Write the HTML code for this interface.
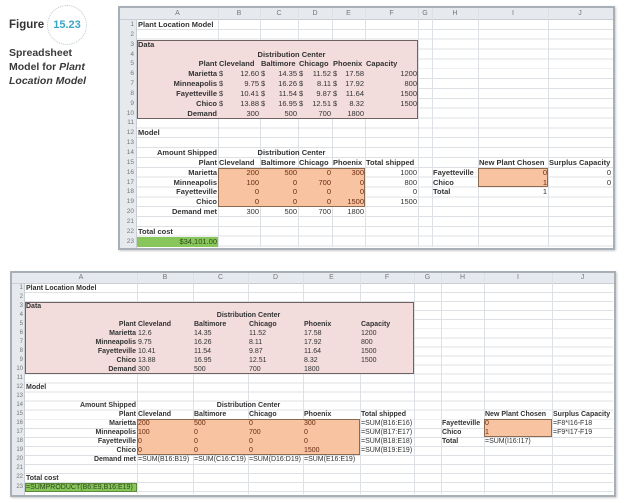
<!DOCTYPE html>
<html><head><meta charset="utf-8"><style>
*{margin:0;padding:0;box-sizing:border-box}
body{width:624px;height:503px;background:#fff;position:relative;overflow:hidden;font-family:"Liberation Sans",Arial,sans-serif}
div{position:absolute}
.t{font-weight:bold;font-size:7.5px;color:#333;white-space:nowrap;line-height:9.85px;height:9.85px}
.b .t,.t.bt{line-height:9.05px;height:9.05px;font-size:7px}
.n{font-weight:normal}
.R{text-align:right}.C{text-align:center}
.o{color:#6b2a12;font-weight:normal}
.ta{left:138px;width:79px}.tb{left:219px;width:40px}.tc{left:261px;width:36px}.td{left:299px;width:32px}.te{left:333px;width:31px}.tf{left:366px;width:51px}.th{left:433px;width:44px}.ti{left:479px;width:68px}.tj{left:549px;width:62px}
.ba{left:26px;width:110px}.bb{left:138px;width:54px}.bc{left:194px;width:53px}.bd{left:249px;width:53px}.be{left:304px;width:55px}.bf{left:361px;width:52px}.bh{left:442px;width:41px}.bi{left:485px;width:66px}.bj{left:553px;width:59px}
.frame{border:2px solid #a9afb6;box-shadow:1px 1px 2px #ccc}
.hdr{background:#e6e9ee}
.vl{width:1px;background:#dde1e6}
.hl{font-size:7px;color:#777;text-align:center;line-height:12px}
.rn{font-size:6.5px;color:#777;text-align:right;width:12px}
</style></head><body>

<!-- caption -->
<div style="left:9px;top:19px;font-weight:bold;font-size:11.5px;color:#333">Figure</div>
<div style="left:47px;top:5px;width:40px;height:40px;border-radius:50%;border:1.5px dotted #b9c6cc"></div>
<div style="left:50px;top:19px;width:34px;text-align:center;font-weight:bold;font-size:11px;color:#3aa6c4">15.23</div>
<div style="left:9px;top:46px;font-weight:bold;font-size:10.5px;color:#3a3a3a;line-height:14px">Spreadsheet<br>Model for <i>Plant</i><br><i>Location Model</i></div>

<!-- ============ TOP SHEET ============ -->
<div class="frame" style="left:118px;top:6px;width:497px;height:244px"></div>
<div class="hdr" style="left:120px;top:8px;width:493px;height:12px;border-bottom:1px solid #c8cdd3"></div>
<div class="hdr" style="left:120px;top:20px;width:17px;height:228px;border-right:1px solid #c8cdd3"></div>
<div style="left:137px;top:20px;width:476px;height:227px;background:repeating-linear-gradient(to bottom,transparent 0,transparent 8.85px,#dde1e6 8.85px,#dde1e6 9.85px)"></div>
<div class="vl" style="left:218px;top:8px;height:239px"></div>
<div class="vl" style="left:260px;top:8px;height:239px"></div>
<div class="vl" style="left:298px;top:8px;height:239px"></div>
<div class="vl" style="left:332px;top:8px;height:239px"></div>
<div class="vl" style="left:365px;top:8px;height:239px"></div>
<div class="vl" style="left:418px;top:8px;height:239px"></div>
<div class="vl" style="left:432px;top:8px;height:239px"></div>
<div class="vl" style="left:478px;top:8px;height:239px"></div>
<div class="vl" style="left:548px;top:8px;height:239px"></div>
<div class="hl" style="left:137px;top:8px;width:81px">A</div>
<div class="hl" style="left:218px;top:8px;width:42px">B</div>
<div class="hl" style="left:260px;top:8px;width:38px">C</div>
<div class="hl" style="left:298px;top:8px;width:34px">D</div>
<div class="hl" style="left:332px;top:8px;width:33px">E</div>
<div class="hl" style="left:365px;top:8px;width:53px">F</div>
<div class="hl" style="left:418px;top:8px;width:14px">G</div>
<div class="hl" style="left:432px;top:8px;width:46px">H</div>
<div class="hl" style="left:478px;top:8px;width:70px">I</div>
<div class="hl" style="left:548px;top:8px;width:64px">J</div>
<div class="rn" style="left:122px;top:20px;line-height:9.85px">1<br>2<br>3<br>4<br>5<br>6<br>7<br>8<br>9<br>10<br>11<br>12<br>13<br>14<br>15<br>16<br>17<br>18<br>19<br>20<br>21<br>22<br>23</div>

<div style="left:137px;top:39.7px;width:281px;height:79px;background:#f2dcdc;border:1px solid #6e6262"></div>
<div style="left:218px;top:167.75px;width:147px;height:39.4px;background:#f8c3a0;border:1px solid #8b6a50"></div>
<div style="left:478px;top:167.75px;width:70px;height:19.7px;background:#f8c3a0;border:1px solid #8b6a50"></div>
<div style="left:137px;top:236.7px;width:81px;height:9.85px;background:#88c55a"></div>

<div class="t ta" style="top:20px">Plant Location Model</div>
<div class="t ta" style="top:39.7px">Data</div>
<div class="t C" style="left:218px;width:147px;top:49.55px">Distribution Center</div>
<div class="t ta R" style="top:59.4px">Plant</div>
<div class="t tb" style="top:59.4px">Cleveland</div>
<div class="t tc" style="top:59.4px">Baltimore</div>
<div class="t td" style="top:59.4px">Chicago</div>
<div class="t te" style="top:59.4px">Phoenix</div>
<div class="t tf" style="top:59.4px">Capacity</div>

<div class="t ta R" style="top:69.25px">Marietta</div>
<div class="t ta R" style="top:79.1px">Minneapolis</div>
<div class="t ta R" style="top:88.95px">Fayetteville</div>
<div class="t ta R" style="top:98.8px">Chico</div>
<div class="t ta R" style="top:108.65px">Demand</div>

<div class="t n tb" style="top:69.25px">$</div><div class="t n tb R" style="top:69.25px">12.60</div>
<div class="t n tc" style="top:69.25px">$</div><div class="t n tc R" style="top:69.25px">14.35</div>
<div class="t n td" style="top:69.25px">$</div><div class="t n td R" style="top:69.25px">11.52</div>
<div class="t n te" style="top:69.25px">$</div><div class="t n te R" style="top:69.25px">17.58</div>
<div class="t n tf R" style="top:69.25px">1200</div>
<div class="t n tb" style="top:79.1px">$</div><div class="t n tb R" style="top:79.1px">9.75</div>
<div class="t n tc" style="top:79.1px">$</div><div class="t n tc R" style="top:79.1px">16.26</div>
<div class="t n td" style="top:79.1px">$</div><div class="t n td R" style="top:79.1px">8.11</div>
<div class="t n te" style="top:79.1px">$</div><div class="t n te R" style="top:79.1px">17.92</div>
<div class="t n tf R" style="top:79.1px">800</div>
<div class="t n tb" style="top:88.95px">$</div><div class="t n tb R" style="top:88.95px">10.41</div>
<div class="t n tc" style="top:88.95px">$</div><div class="t n tc R" style="top:88.95px">11.54</div>
<div class="t n td" style="top:88.95px">$</div><div class="t n td R" style="top:88.95px">9.87</div>
<div class="t n te" style="top:88.95px">$</div><div class="t n te R" style="top:88.95px">11.64</div>
<div class="t n tf R" style="top:88.95px">1500</div>
<div class="t n tb" style="top:98.8px">$</div><div class="t n tb R" style="top:98.8px">13.88</div>
<div class="t n tc" style="top:98.8px">$</div><div class="t n tc R" style="top:98.8px">16.95</div>
<div class="t n td" style="top:98.8px">$</div><div class="t n td R" style="top:98.8px">12.51</div>
<div class="t n te" style="top:98.8px">$</div><div class="t n te R" style="top:98.8px">8.32</div>
<div class="t n tf R" style="top:98.8px">1500</div>
<div class="t n tb R" style="top:108.65px">300</div>
<div class="t n tc R" style="top:108.65px">500</div>
<div class="t n td R" style="top:108.65px">700</div>
<div class="t n te R" style="top:108.65px">1800</div>

<div class="t ta" style="top:128.35px">Model</div>
<div class="t ta R" style="top:148.05px">Amount Shipped</div>
<div class="t C" style="left:218px;width:147px;top:148.05px">Distribution Center</div>
<div class="t ta R" style="top:157.9px">Plant</div>
<div class="t tb" style="top:157.9px">Cleveland</div>
<div class="t tc" style="top:157.9px">Baltimore</div>
<div class="t td" style="top:157.9px">Chicago</div>
<div class="t te" style="top:157.9px">Phoenix</div>
<div class="t tf" style="top:157.9px">Total shipped</div>
<div class="t ti" style="top:157.9px">New Plant Chosen</div>
<div class="t tj" style="top:157.9px">Surplus Capacity</div>

<div class="t ta R" style="top:167.75px">Marietta</div>
<div class="t ta R" style="top:177.6px">Minneapolis</div>
<div class="t ta R" style="top:187.45px">Fayetteville</div>
<div class="t ta R" style="top:197.3px">Chico</div>
<div class="t ta R" style="top:207.15px">Demand met</div>

<div class="t o tb R" style="top:167.75px">200</div><div class="t o tc R" style="top:167.75px">500</div><div class="t o td R" style="top:167.75px">0</div><div class="t o te R" style="top:167.75px">300</div><div class="t n tf R" style="top:167.75px">1000</div>
<div class="t o tb R" style="top:177.6px">100</div><div class="t o tc R" style="top:177.6px">0</div><div class="t o td R" style="top:177.6px">700</div><div class="t o te R" style="top:177.6px">0</div><div class="t n tf R" style="top:177.6px">800</div>
<div class="t o tb R" style="top:187.45px">0</div><div class="t o tc R" style="top:187.45px">0</div><div class="t o td R" style="top:187.45px">0</div><div class="t o te R" style="top:187.45px">0</div><div class="t n tf R" style="top:187.45px">0</div>
<div class="t o tb R" style="top:197.3px">0</div><div class="t o tc R" style="top:197.3px">0</div><div class="t o td R" style="top:197.3px">0</div><div class="t o te R" style="top:197.3px">1500</div><div class="t n tf R" style="top:197.3px">1500</div>
<div class="t n tb R" style="top:207.15px">300</div><div class="t n tc R" style="top:207.15px">500</div><div class="t n td R" style="top:207.15px">700</div><div class="t n te R" style="top:207.15px">1800</div>

<div class="t th" style="top:167.75px">Fayetteville</div><div class="t o ti R" style="top:167.75px">0</div><div class="t n tj R" style="top:167.75px">0</div>
<div class="t th" style="top:177.6px">Chico</div><div class="t o ti R" style="top:177.6px">1</div><div class="t n tj R" style="top:177.6px">0</div>
<div class="t th" style="top:187.45px">Total</div><div class="t n ti R" style="top:187.45px">1</div>

<div class="t ta" style="top:226.85px">Total cost</div>
<div class="t n ta R" style="top:236.7px;color:#2c4a1a">$34,101.00</div>

<!-- ============ BOTTOM SHEET ============ -->
<div class="b">
<div class="frame" style="left:10px;top:271px;width:606px;height:226px"></div>
<div class="hdr" style="left:12px;top:273px;width:602px;height:10.5px;border-bottom:1px solid #c8cdd3"></div>
<div class="hdr" style="left:12px;top:283.5px;width:13px;height:211px;border-right:1px solid #c8cdd3"></div>
<div style="left:25px;top:283.5px;width:588px;height:210px;background:repeating-linear-gradient(to bottom,transparent 0,transparent 8.05px,#dde1e6 8.05px,#dde1e6 9.05px)"></div>
<div class="vl" style="left:137px;top:273px;height:221px"></div>
<div class="vl" style="left:193px;top:273px;height:221px"></div>
<div class="vl" style="left:248px;top:273px;height:221px"></div>
<div class="vl" style="left:303px;top:273px;height:221px"></div>
<div class="vl" style="left:360px;top:273px;height:221px"></div>
<div class="vl" style="left:414px;top:273px;height:221px"></div>
<div class="vl" style="left:441px;top:273px;height:221px"></div>
<div class="vl" style="left:484px;top:273px;height:221px"></div>
<div class="vl" style="left:552px;top:273px;height:221px"></div>
<div class="hl" style="left:25px;top:273px;width:112px;line-height:10.5px">A</div>
<div class="hl" style="left:137px;top:273px;width:56px;line-height:10.5px">B</div>
<div class="hl" style="left:193px;top:273px;width:55px;line-height:10.5px">C</div>
<div class="hl" style="left:248px;top:273px;width:55px;line-height:10.5px">D</div>
<div class="hl" style="left:303px;top:273px;width:57px;line-height:10.5px">E</div>
<div class="hl" style="left:360px;top:273px;width:54px;line-height:10.5px">F</div>
<div class="hl" style="left:414px;top:273px;width:27px;line-height:10.5px">G</div>
<div class="hl" style="left:441px;top:273px;width:43px;line-height:10.5px">H</div>
<div class="hl" style="left:484px;top:273px;width:68px;line-height:10.5px">I</div>
<div class="hl" style="left:552px;top:273px;width:61px;line-height:10.5px">J</div>
<div class="rn" style="left:11px;top:283.5px;line-height:9.05px;font-size:6px">1<br>2<br>3<br>4<br>5<br>6<br>7<br>8<br>9<br>10<br>11<br>12<br>13<br>14<br>15<br>16<br>17<br>18<br>19<br>20<br>21<br>22<br>23</div>

<div style="left:25px;top:301.6px;width:389px;height:72.4px;background:#f2dcdc;border:1px solid #6e6262"></div>
<div style="left:137px;top:419.25px;width:223px;height:36.2px;background:#f8c3a0;border:1px solid #8b6a50"></div>
<div style="left:484px;top:419.25px;width:68px;height:18.1px;background:#f8c3a0;border:1px solid #8b6a50"></div>
<div style="left:25px;top:482.6px;width:112px;height:9.05px;background:#88c55a;border:1px solid #5d8a3a"></div>

<div class="t ba" style="top:283.5px">Plant Location Model</div>
<div class="t ba" style="top:301.6px">Data</div>
<div class="t C" style="left:137px;width:223px;top:310.65px">Distribution Center</div>
<div class="t ba R" style="top:319.7px">Plant</div>
<div class="t bb" style="top:319.7px">Cleveland</div>
<div class="t bc" style="top:319.7px">Baltimore</div>
<div class="t bd" style="top:319.7px">Chicago</div>
<div class="t be" style="top:319.7px">Phoenix</div>
<div class="t bf" style="top:319.7px">Capacity</div>
<div class="t ba R" style="top:328.75px">Marietta</div>
<div class="t ba R" style="top:337.8px">Minneapolis</div>
<div class="t ba R" style="top:346.85px">Fayetteville</div>
<div class="t ba R" style="top:355.9px">Chico</div>
<div class="t ba R" style="top:364.95px">Demand</div>

<div class="t n bb" style="top:328.75px">12.6</div><div class="t n bc" style="top:328.75px">14.35</div><div class="t n bd" style="top:328.75px">11.52</div><div class="t n be" style="top:328.75px">17.58</div><div class="t n bf" style="top:328.75px">1200</div>
<div class="t n bb" style="top:337.8px">9.75</div><div class="t n bc" style="top:337.8px">16.26</div><div class="t n bd" style="top:337.8px">8.11</div><div class="t n be" style="top:337.8px">17.92</div><div class="t n bf" style="top:337.8px">800</div>
<div class="t n bb" style="top:346.85px">10.41</div><div class="t n bc" style="top:346.85px">11.54</div><div class="t n bd" style="top:346.85px">9.87</div><div class="t n be" style="top:346.85px">11.64</div><div class="t n bf" style="top:346.85px">1500</div>
<div class="t n bb" style="top:355.9px">13.88</div><div class="t n bc" style="top:355.9px">16.95</div><div class="t n bd" style="top:355.9px">12.51</div><div class="t n be" style="top:355.9px">8.32</div><div class="t n bf" style="top:355.9px">1500</div>
<div class="t n bb" style="top:364.95px">300</div><div class="t n bc" style="top:364.95px">500</div><div class="t n bd" style="top:364.95px">700</div><div class="t n be" style="top:364.95px">1800</div>

<div class="t ba" style="top:383.05px">Model</div>
<div class="t ba R" style="top:401.15px">Amount Shipped</div>
<div class="t C" style="left:137px;width:223px;top:401.15px">Distribution Center</div>
<div class="t ba R" style="top:410.2px">Plant</div>
<div class="t bb" style="top:410.2px">Cleveland</div>
<div class="t bc" style="top:410.2px">Baltimore</div>
<div class="t bd" style="top:410.2px">Chicago</div>
<div class="t be" style="top:410.2px">Phoenix</div>
<div class="t bf" style="top:410.2px">Total shipped</div>
<div class="t bi" style="top:410.2px">New Plant Chosen</div>
<div class="t bj" style="top:410.2px">Surplus Capacity</div>

<div class="t ba R" style="top:419.25px">Marietta</div>
<div class="t ba R" style="top:428.3px">Minneapolis</div>
<div class="t ba R" style="top:437.35px">Fayetteville</div>
<div class="t ba R" style="top:446.4px">Chico</div>
<div class="t ba R" style="top:455.45px">Demand met</div>

<div class="t o bb" style="top:419.25px">200</div><div class="t o bc" style="top:419.25px">500</div><div class="t o bd" style="top:419.25px">0</div><div class="t o be" style="top:419.25px">300</div><div class="t n bf" style="top:419.25px">=SUM(B16:E16)</div>
<div class="t o bb" style="top:428.3px">100</div><div class="t o bc" style="top:428.3px">0</div><div class="t o bd" style="top:428.3px">700</div><div class="t o be" style="top:428.3px">0</div><div class="t n bf" style="top:428.3px">=SUM(B17:E17)</div>
<div class="t o bb" style="top:437.35px">0</div><div class="t o bc" style="top:437.35px">0</div><div class="t o bd" style="top:437.35px">0</div><div class="t o be" style="top:437.35px">0</div><div class="t n bf" style="top:437.35px">=SUM(B18:E18)</div>
<div class="t o bb" style="top:446.4px">0</div><div class="t o bc" style="top:446.4px">0</div><div class="t o bd" style="top:446.4px">0</div><div class="t o be" style="top:446.4px">1500</div><div class="t n bf" style="top:446.4px">=SUM(B19:E19)</div>
<div class="t n bb" style="top:455.45px">=SUM(B16:B19)</div><div class="t n bc" style="top:455.45px">=SUM(C16:C19)</div><div class="t n bd" style="top:455.45px">=SUM(D16:D19)</div><div class="t n be" style="top:455.45px">=SUM(E16:E19)</div>

<div class="t bh" style="top:419.25px">Fayetteville</div><div class="t o bi" style="top:419.25px">0</div><div class="t n bj" style="top:419.25px">=F8*I16-F18</div>
<div class="t bh" style="top:428.3px">Chico</div><div class="t o bi" style="top:428.3px">1</div><div class="t n bj" style="top:428.3px">=F9*I17-F19</div>
<div class="t bh" style="top:437.35px">Total</div><div class="t n bi" style="top:437.35px">=SUM(I16:I17)</div>

<div class="t ba" style="top:473.55px">Total cost</div>
<div class="t n ba" style="top:482.6px;color:#2c4a1a">=SUMPRODUCT(B6:E9,B16:E19)</div>
</div>
</body></html>
